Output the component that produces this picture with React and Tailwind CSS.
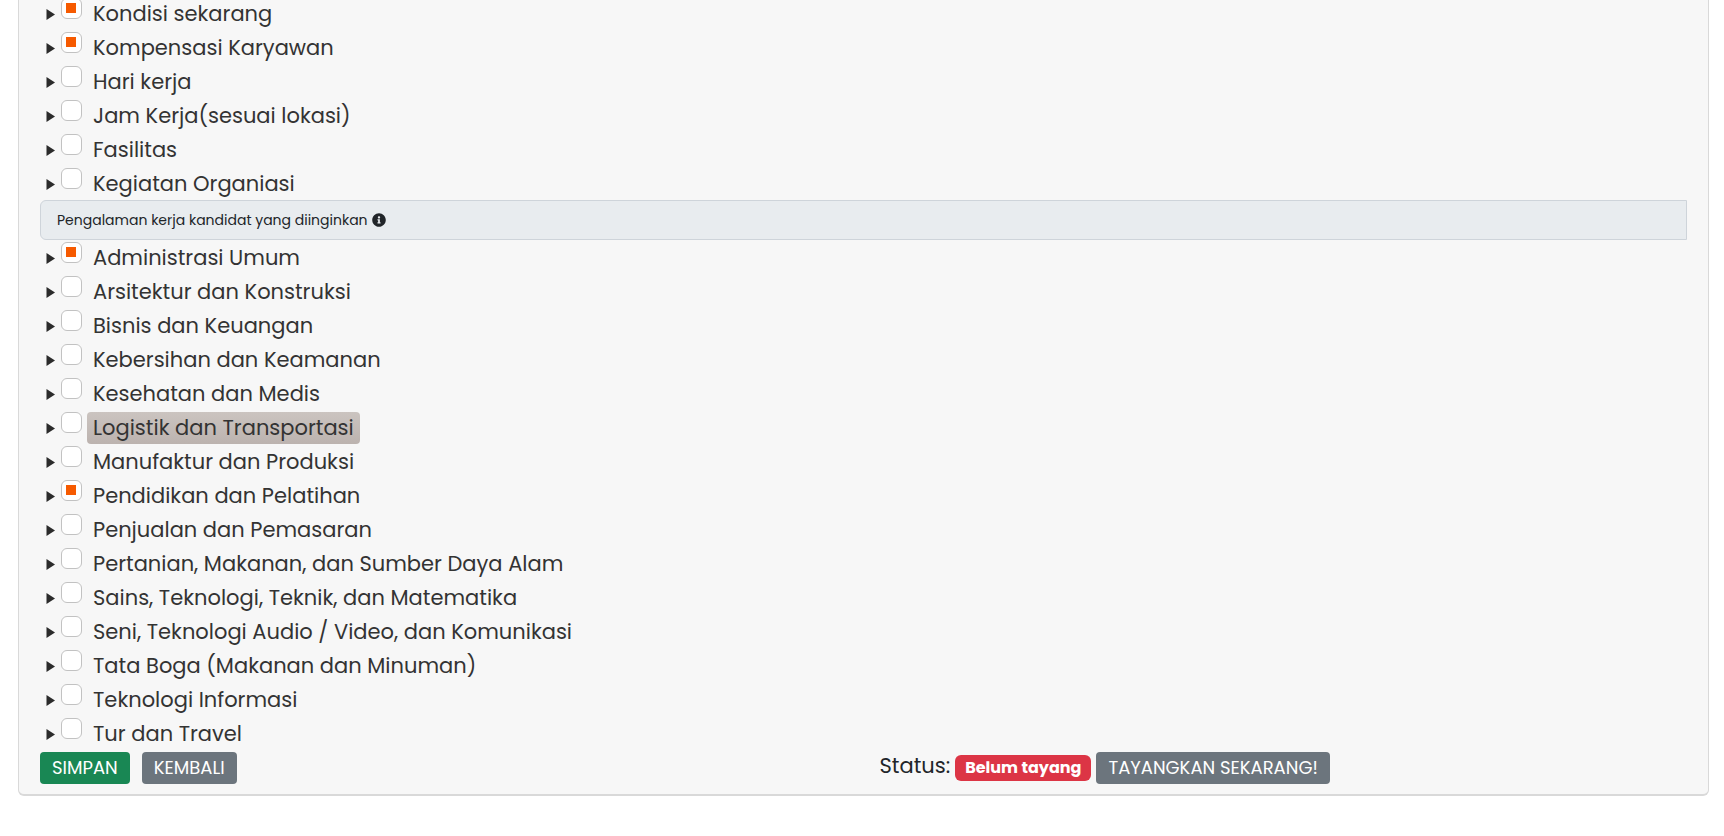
import { useState } from "react";
import { FaInfoCircle } from "react-icons/fa";

const criteria = [
  { id: "kondisi", label: "Kondisi sekarang", checked: true },
  { id: "kompensasi", label: "Kompensasi Karyawan", checked: true },
  { id: "hari", label: "Hari kerja" },
  { id: "jam", label: "Jam Kerja(sesuai lokasi)" },
  { id: "fasilitas", label: "Fasilitas" },
  { id: "kegiatan", label: "Kegiatan Organiasi" },
];

const experiences = [
  { id: "administrasi", label: "Administrasi Umum", checked: true },
  { id: "arsitektur", label: "Arsitektur dan Konstruksi" },
  { id: "bisnis", label: "Bisnis dan Keuangan" },
  { id: "kebersihan", label: "Kebersihan dan Keamanan" },
  { id: "kesehatan", label: "Kesehatan dan Medis" },
  { id: "logistik", label: "Logistik dan Transportasi", active: true },
  { id: "manufaktur", label: "Manufaktur dan Produksi" },
  { id: "pendidikan", label: "Pendidikan dan Pelatihan", checked: true },
  { id: "penjualan", label: "Penjualan dan Pemasaran" },
  { id: "pertanian", label: "Pertanian, Makanan, dan Sumber Daya Alam" },
  { id: "sains", label: "Sains, Teknologi, Teknik, dan Matematika" },
  { id: "seni", label: "Seni, Teknologi Audio / Video, dan Komunikasi" },
  { id: "tataboga", label: "Tata Boga (Makanan dan Minuman)" },
  { id: "teknologi", label: "Teknologi Informasi" },
  { id: "tur", label: "Tur dan Travel" },
];

function TreeItem({ item }) {
  const [checked, setChecked] = useState(Boolean(item.checked));

  return (
    <li className="flex items-start pt-0.5 pl-1.5">
      <button type="button" aria-label={`Buka ${item.label}`} className="flex h-8 w-[15px] items-center">
        <svg className="h-[11px] w-[9px]" viewBox="0 0 9 11" fill="#2b2b2b">
          <path d="M0.5 0L9 5.5L0.5 11Z" />
        </svg>
      </button>
      <input
        id={item.id}
        type="checkbox"
        checked={checked}
        onChange={(e) => setChecked(e.target.checked)}
        className="size-[21px] shrink-0 appearance-none rounded-md border border-[#c2c2c2] bg-white checked:before:m-1 checked:before:block checked:before:size-[10px] checked:before:bg-[#f65a00] checked:before:content-['']"
      />
      <label
        htmlFor={item.id}
        className={
          item.active
            ? "ml-[5px] rounded bg-linear-to-b from-[#cbc4c0] to-[#bcb3af] px-1.5 text-[21px] leading-8 text-[#333333]"
            : "ml-[5px] rounded px-1.5 text-[21px] leading-8 text-[#333333]"
        }
      >
        {item.label}
      </label>
    </li>
  );
}

function Tree({ items }) {
  return (
    <ul>
      {items.map((item) => (
        <TreeItem key={item.id} item={item} />
      ))}
    </ul>
  );
}

export default function App() {
  return (
    <main className="min-h-screen overflow-hidden bg-white font-[Poppins,Inter,sans-serif] text-[#212529]">
      <form className="-mt-1 mr-[15px] ml-[18px] rounded-b-md border-x border-b-2 border-[#d9d9d9] bg-[#f7f7f7] px-[21px] pb-2.5">
        <Tree items={criteria} />

        {/* Section heading */}
        <div className="flex h-10 items-center gap-1 rounded-l-md border border-[#ced4da] bg-[#e8ecef] px-4 text-sm">
          <span>Pengalaman kerja kandidat yang diinginkan</span>
          <FaInfoCircle className="size-[14px]" />
        </div>

        <Tree items={experiences} />

        {/* Actions */}
        <div className="grid grid-cols-2 gap-8 pt-0.5">
          <div className="flex gap-3">
            <button type="button" className="h-8 rounded bg-[#198754] px-3 text-lg leading-8 text-white">
              SIMPAN
            </button>
            <button type="button" className="h-8 rounded bg-[#6c757d] px-3 text-lg leading-8 text-white">
              KEMBALI
            </button>
          </div>
          <div className="flex items-center gap-[5px]">
            <span className="self-start text-[21px] leading-7">Status:</span>
            <span className="h-[26px] rounded-md bg-[#dc3545] px-2.5 text-base leading-[26px] font-bold text-white">
              Belum tayang
            </span>
            <button type="button" className="h-8 rounded bg-[#6c757d] px-3 text-lg leading-8 text-white">
              TAYANGKAN SEKARANG!
            </button>
          </div>
        </div>
      </form>
    </main>
  );
}
